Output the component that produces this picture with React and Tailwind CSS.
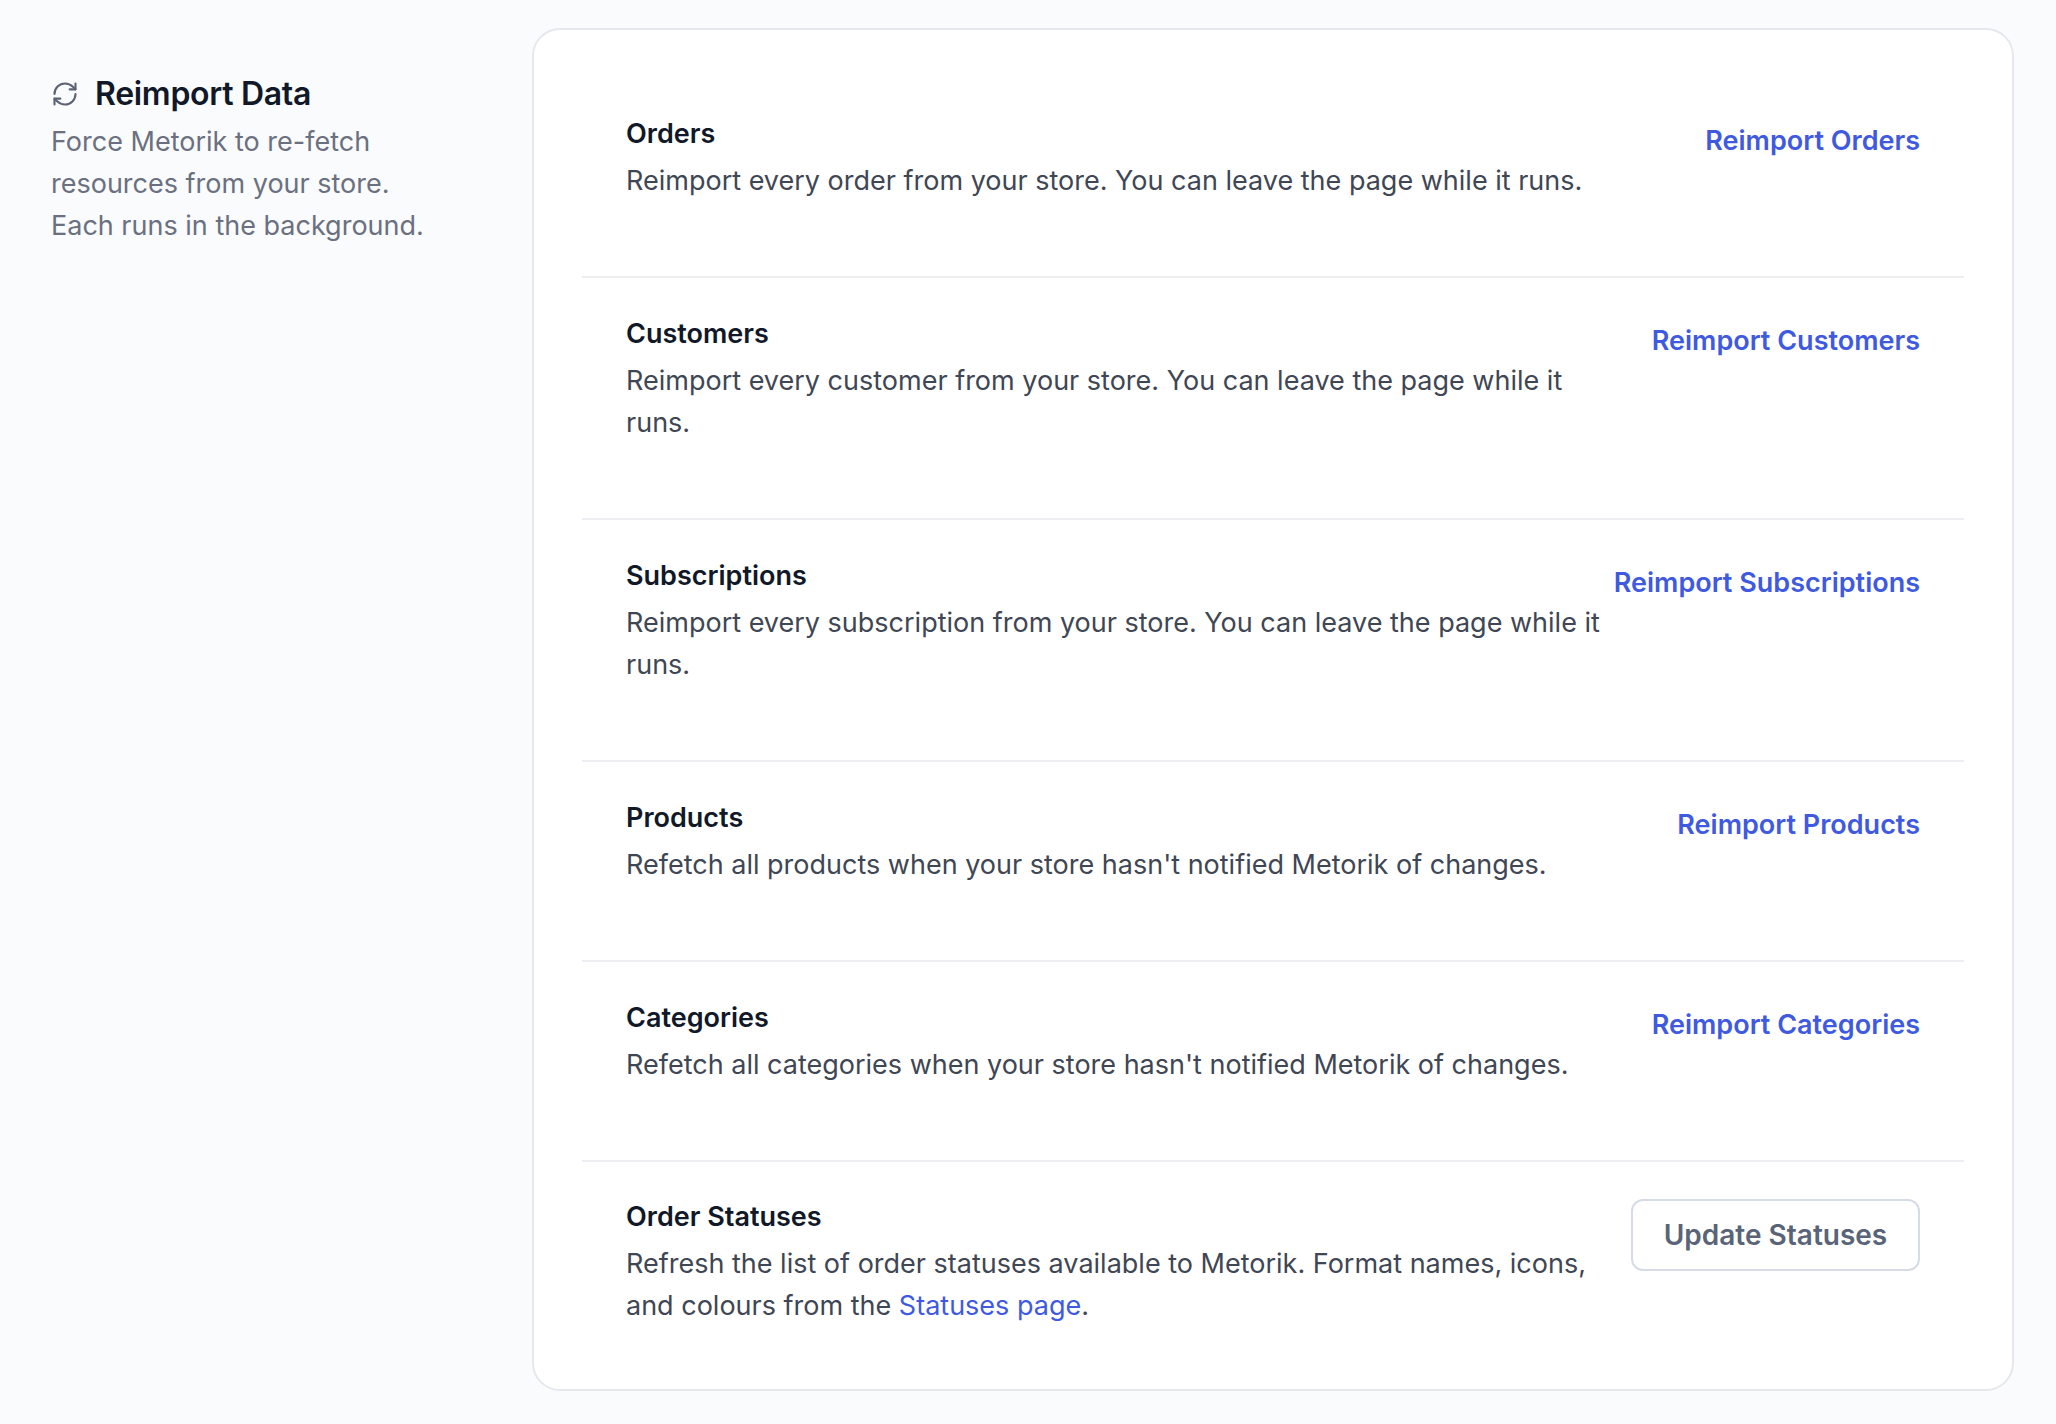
import React from "react";

const rows = [
  { t: "Orders", d: "Reimport every order from your store. You can leave the page while it runs.", a: "Reimport Orders" },
  { t: "Customers", d: "Reimport every customer from your store. You can leave the page while it runs.", a: "Reimport Customers" },
  { t: "Subscriptions", d: "Reimport every subscription from your store. You can leave the page while it runs.", a: "Reimport Subscriptions" },
  { t: "Products", d: "Refetch all products when your store hasn't notified Metorik of changes.", a: "Reimport Products" },
  { t: "Categories", d: "Refetch all categories when your store hasn't notified Metorik of changes.", a: "Reimport Categories" },
];

export default function App() {
  return (
    <div className="min-h-[1424px] w-[2056px] bg-[#fafbfd] flex" style={{ fontFamily: "Inter, 'Noto Sans', sans-serif" }}>
      <div className="w-[532px] shrink-0 pl-[51px] pt-[73px]">
        <div className="flex items-center gap-[16px] h-[42px]">
          <svg width="28" height="28" viewBox="0 0 24 24" fill="none" stroke="#5b6273" strokeWidth="1.8" strokeLinecap="round" strokeLinejoin="round">
            <path d="M3 12a9 9 0 0 1 9-9 9.75 9.75 0 0 1 6.74 2.74L21 8" />
            <path d="M21 3v5h-5" />
            <path d="M21 12a9 9 0 0 1-9 9 9.75 9.75 0 0 1-6.74-2.74L3 16" />
            <path d="M8 16H3v5" />
          </svg>
          <span className="text-[32px] font-semibold text-[#111827] tracking-[-0.3px]">Reimport Data</span>
        </div>
        <p className="mt-[6px] w-[390px] text-[27px] leading-[42px] text-[#6b7080]">
          Force Metorik to re-fetch resources from your store. Each runs in the background.
        </p>
      </div>
      <div className="mt-[28px] mb-[32px] w-[1482px] h-[1363px] bg-white border-2 border-[#e6e8ee] rounded-[28px] pt-[48px] px-[48px]">
        {rows.map((r) => (
          <div key={r.t} className="border-b-2 border-[#eceef2] pt-[39px] pb-[74px] px-[44px] flex">
            <div className="w-[985px]">
              <div className="text-[27px] leading-[34px] font-semibold text-[#111827]">{r.t}</div>
              <div className="mt-[9px] text-[27px] leading-[42px] text-[#3f4654]">{r.d}</div>
            </div>
            <div className="ml-auto mt-[7px] text-[27px] leading-[34px] font-semibold text-[#3f5ae0] whitespace-nowrap">{r.a}</div>
          </div>
        ))}
        <div className="pt-[38px] pb-[74px] px-[44px] flex">
          <div className="w-[985px]">
            <div className="text-[27px] leading-[34px] font-semibold text-[#111827]">Order Statuses</div>
            <div className="mt-[9px] text-[27px] leading-[42px] text-[#3f4654]">
              Refresh the list of order statuses available to Metorik. Format names, icons, and colours from the{" "}
              <span className="text-[#3f5ae0]">Statuses page</span>.
            </div>
          </div>
          <div className="ml-auto -mt-[1px] h-[72px] w-[289px] shrink-0 border-2 border-[#d5dce6] rounded-[12px] flex items-center justify-center text-[28px] font-semibold text-[#5a6478]">
            Update Statuses
          </div>
        </div>
      </div>
    </div>
  );
}
